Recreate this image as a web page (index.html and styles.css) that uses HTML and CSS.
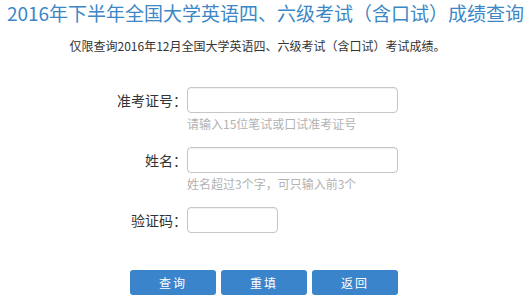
FILE: index.html
```html
<!DOCTYPE html>
<html lang="zh-CN">
<head>
<meta charset="utf-8">
<title>成绩查询</title>
<link rel="stylesheet" href="styles.css">
</head>
<body>
<div class="page">
  <h1 class="title">2016年下半年全国大学英语四、六级考试（含口试）成绩查询</h1>
  <p class="notice">仅限查询2016年12月全国大学英语四、六级考试（含口试）考试成绩。</p>
  <form class="form">
    <label class="label" for="zkz">准考证号：</label>
    <div class="field">
      <input class="input input-wide" id="zkz" type="text">
      <div class="hint">请输入15位笔试或口试准考证号</div>
    </div>
    <label class="label" for="xm">姓名：</label>
    <div class="field">
      <input class="input input-wide" id="xm" type="text">
      <div class="hint">姓名超过3个字，可只输入前3个</div>
    </div>
    <label class="label" for="yzm">验证码：</label>
    <div class="field">
      <input class="input input-short" id="yzm" type="text">
    </div>
  </form>
  <div class="buttons">
    <button class="btn" type="button">查询</button>
    <button class="btn" type="button">重填</button>
    <button class="btn" type="button">返回</button>
  </div>
</div>
</body>
</html>
```
FILE: styles.css
```css
html, body {
  margin: 0;
  padding: 0;
  background: #ffffff;
}
body {
  font-family: "Noto Sans CJK SC", "Noto Sans", sans-serif;
  color: #333333;
}
.page {
  width: 531px;
}
.title {
  margin: 0;
  font-size: 19px;
  font-weight: normal;
  line-height: 26px;
  color: #3d87c6;
  text-align: center;
  white-space: nowrap;
}
.notice {
  margin: 11px 0 0;
  font-size: 12px;
  line-height: 18px;
  text-align: center;
  padding-right: 16px;
  color: #333333;
}
.form {
  margin-top: 32px;
  display: grid;
  grid-template-columns: 187px 1fr;
  column-gap: 0;
  row-gap: 14px;
}
.label {
  font-family: "Noto Sans CJK TC", "Noto Sans CJK SC", sans-serif;
  font-size: 14px;
  line-height: 26px;
  text-align: right;
  color: #333333;
}
.field {
  display: flex;
  flex-direction: column;
  align-items: flex-start;
}
.input {
  box-sizing: border-box;
  height: 26px;
  margin: 0;
  border: 1px solid #c6c6c6;
  border-radius: 4px;
  background: #ffffff;
  box-shadow: inset 0 1px 1px rgba(0,0,0,0.06);
  padding: 0 6px;
}
.input-wide {
  width: 211px;
}
.input-short {
  width: 91px;
}
.hint {
  margin-top: 2px;
  font-size: 12px;
  line-height: 18px;
  color: #b2b2b2;
}
.buttons {
  margin-top: 37px;
  padding-left: 130px;
  display: flex;
  gap: 5px;
}
.btn {
  width: 86px;
  height: 25px;
  border: none;
  border-radius: 3px;
  background: #3a84cc;
  color: #ffffff;
  font-family: "Noto Sans CJK SC", "Noto Sans", sans-serif;
  font-size: 12px;
  padding: 0;
  letter-spacing: 2px;
}
```
